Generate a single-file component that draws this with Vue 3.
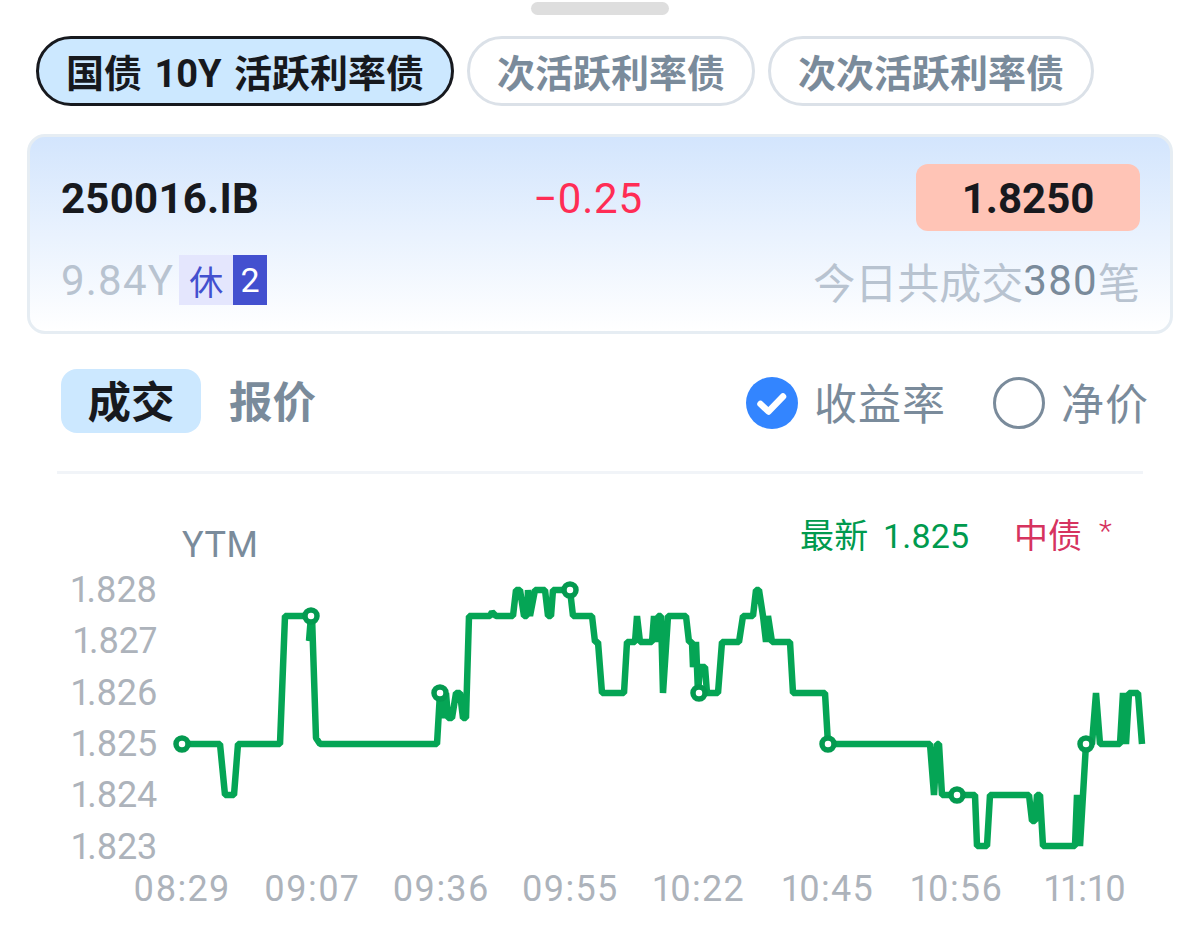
<script setup>
const tabs = [
  { label: '国债 10Y 活跃利率债', active: true },
  { label: '次活跃利率债', active: false },
  { label: '次次活跃利率债', active: false },
]
const yLabels = [
  ['1.828', 589], ['1.827', 640], ['1.826', 692], ['1.825', 743], ['1.824', 794], ['1.823', 846],
]
const xLabels = [
  ['08:29', 182], ['09:07', 312], ['09:36', 441], ['09:55', 570], ['10:22', 699], ['10:45', 828], ['10:56', 957], ['11:10', 1086],
]
const line = [
  [182,743],[220,743],[225,794],[234,794],[238,743],[280,743],[285,615],[311,615],[309,640],[312,615],[316,737],[320,743],
  [437,743],[440,692],[443,717],[446,692],[448,717],[452,717],[456,692],[460,692],[463,717],[466,717],[469,615],
  [490,615],[492,611],[496,615],[513,615],[516,589],[520,589],[524,615],[527,615],[528,589],[530,615],[535,589],[545,589],[548,615],[551,615],[553,589],[570,589],
  [573,615],[592,615],[595,641],[598,641],[602,692],[624,692],[627,641],[635,641],[637,615],[640,641],[652,641],[654,615],[657,641],[658,615],[661,615],[663,692],[668,615],
  [686,615],[689,641],[692,641],[693,666],[696,641],[698,692],[700,666],[705,666],[707,692],[718,692],[722,641],[739,641],[743,615],[753,615],[756,589],[759,589],[763,615],[766,641],[768,615],[772,641],
  [790,641],[793,692],[825,692],[828,743],[930,743],[934,794],[937,743],[939,743],[942,794],[975,794],[977,845],[987,845],[990,794],
  [1029,794],[1032,820],[1035,820],[1037,794],[1040,794],[1043,845],[1075,845],[1077,794],[1080,845],[1086,743],[1092,743],[1096,692],[1100,743],[1120,743],[1123,692],[1126,743],[1129,692],[1138,692],[1142,743],
]
const points = line.map((p) => p.join(',')).join(' ')
const markers = [[182,743],[311,615],[440,692],[570,589],[699,692],[828,743],[957,794],[1086,743]]
</script>

<template>
  <div class="sheet">
    <div class="handle"></div>
    <div class="tabs">
      <div v-for="t in tabs" :key="t.label" class="tab" :class="{ active: t.active }">{{ t.label }}</div>
    </div>

    <div class="card">
      <div class="row top">
        <div class="code">250016.IB</div>
        <div class="change">−0.25</div>
        <div class="price">1.8250</div>
      </div>
      <div class="row bottom">
        <div class="tenor">
          <span class="years">9.84Y</span>
          <span class="rest">休</span><span class="count">2</span>
        </div>
        <div class="deals">今日共成交<span class="num">380</span>笔</div>
      </div>
    </div>

    <div class="controls">
      <div class="seg">
        <div class="seg-item on">成交</div>
        <div class="seg-item">报价</div>
      </div>
      <div class="radios">
        <div class="radio">
          <svg class="radio-icon" width="52" height="52" viewBox="0 0 52 52">
            <circle cx="26" cy="26" r="26" fill="#3385ff" />
            <path d="M14.5 27 L22.5 34.5 L37 19.5" fill="none" stroke="#fff" stroke-width="6.5" stroke-linecap="round" stroke-linejoin="round" />
          </svg>
          <span>收益率</span>
        </div>
        <div class="radio">
          <svg class="radio-icon" width="52" height="52" viewBox="0 0 52 52">
            <circle cx="26" cy="26" r="24.5" fill="none" stroke="#7a8b9b" stroke-width="3" />
          </svg>
          <span>净价</span>
        </div>
      </div>
    </div>
    <div class="divider"></div>

    <svg class="chart" width="1196" height="471" viewBox="0 473 1196 471">
      <text x="182" y="556" class="ytm">YTM</text>
      <text x="800" y="547" class="legend latest">最新 1.825</text>
      <text x="1014" y="547" class="legend zz">中债</text>
      <text x="1099" y="540" class="legend zz small">*</text>
      <text v-for="l in yLabels" :key="l[0]" x="157" :y="l[1] + 12" class="axis ya" text-anchor="end">{{ l[0] }}</text>
      <text v-for="l in xLabels" :key="l[0]" :x="l[1]" y="900" class="axis xa" text-anchor="middle">{{ l[0] }}</text>
      <polyline :points="points" fill="none" stroke="#00a352" stroke-width="6.5" stroke-linejoin="bevel" opacity="0.98" />
      <circle v-for="m in markers" :key="m[0]" :cx="m[0]" :cy="m[1]" r="6" fill="#fff" stroke="#049a50" stroke-width="5.5" />
    </svg>
  </div>
</template>

<style>
html, body { margin: 0; background: #fff; }
</style>

<style scoped>
.sheet {
  width: 1196px;
  height: 944px;
  overflow: hidden;
  background: #fff;
  font-family: Roboto, "Noto Sans CJK SC", sans-serif;
  box-sizing: border-box;
}
.handle {
  width: 138px;
  height: 13px;
  margin: 2px 0 0 531px;
  border-radius: 7px;
  background: #dedede;
}
.tabs {
  display: flex;
  gap: 13px;
  margin: 21px 0 0 36px;
}
.tab {
  height: 70px;
  box-sizing: border-box;
  padding: 0 27px 2px;
  display: flex;
  align-items: center;
  border: 3px solid #dbe1e8;
  border-radius: 35px;
  font-size: 38px;
  font-weight: 700;
  color: #7a8b9b;
  white-space: pre;
  word-spacing: 3px;
}
.tab.active {
  background: #cce8ff;
  border-color: #17191e;
  color: #17191e;
}
.card {
  margin: 28px 23px 0 27px;
  height: 200px;
  box-sizing: border-box;
  border: 3px solid #e6edf3;
  border-radius: 18px;
  padding: 27px 30px 0 31px;
  background: linear-gradient(180deg, #d3e5fd 0%, #ffffff 100%);
}
.row { display: flex; align-items: center; justify-content: space-between; }
.top { height: 67px; position: relative; }
.code { font-size: 42px; font-weight: 700; color: #17191e; letter-spacing: 0.25px; padding-top: 2px; }
.change {
  position: absolute;
  left: 472px;
  top: 10px;
  font-size: 42px;
  font-weight: 400;
  color: #ff2d55;
  letter-spacing: 0.8px;
}
.price {
  width: 224px;
  height: 67px;
  box-sizing: border-box;
  padding-top: 2px;
  display: flex;
  align-items: center;
  justify-content: center;
  border-radius: 12px;
  background: #ffc4b6;
  font-size: 42px;
  font-weight: 700;
  color: #17191e;
}
.bottom { margin-top: 24px; height: 50px; color: #b8c3d0; font-size: 42px; }
.tenor { display: flex; align-items: center; }
.years { letter-spacing: 1.2px; }
.rest, .count {
  height: 50px;
  display: flex;
  align-items: center;
  justify-content: center;
  font-size: 34px;
}
.rest { width: 54px; margin-left: 5px; background: #e4e6fd; color: #4350cf; }
.count { width: 34px; background: #4350cf; color: #fff; }
.deals { display: flex; align-items: center; }
.num { color: #7a8b9b; letter-spacing: 1.3px; }
.controls {
  display: flex;
  align-items: center;
  justify-content: space-between;
  margin: 35px 47px 0 61px;
  height: 64px;
}
.seg { display: flex; gap: 28px; }
.seg-item {
  height: 64px;
  box-sizing: border-box;
  padding-bottom: 4px;
  display: flex;
  align-items: center;
  font-size: 43.5px;
  font-weight: 700;
  color: #7a8b9b;
}
.seg-item.on {
  width: 140px;
  justify-content: center;
  border-radius: 16px;
  background: #cce8ff;
  color: #17191e;
}
.radios { display: flex; gap: 47px; }
.radio {
  display: flex;
  align-items: center;
  gap: 16px;
  font-size: 43px;
  letter-spacing: 1px;
  color: #7a8b9b;
}
.radio-icon { margin-top: 4px; }
.divider {
  height: 3px;
  margin: 38px 53px 0 57px;
  background: #f1f4f8;
}
.chart { display: block; }
.ytm { font-size: 36px; fill: #7a8b9b; letter-spacing: 0.6px; }
.legend { font-size: 34px; }
.latest { fill: #009a4e; word-spacing: 6px; letter-spacing: 0.2px; }
.zz { fill: #d6335f; }
.small { font-size: 30px; font-weight: 300; }
.axis { font-size: 36px; fill: #adb3bb; font-weight: 400; font-variant-numeric: proportional-nums; }
.ya { letter-spacing: -0.3px; }
.xa { letter-spacing: 1.2px; }
</style>
